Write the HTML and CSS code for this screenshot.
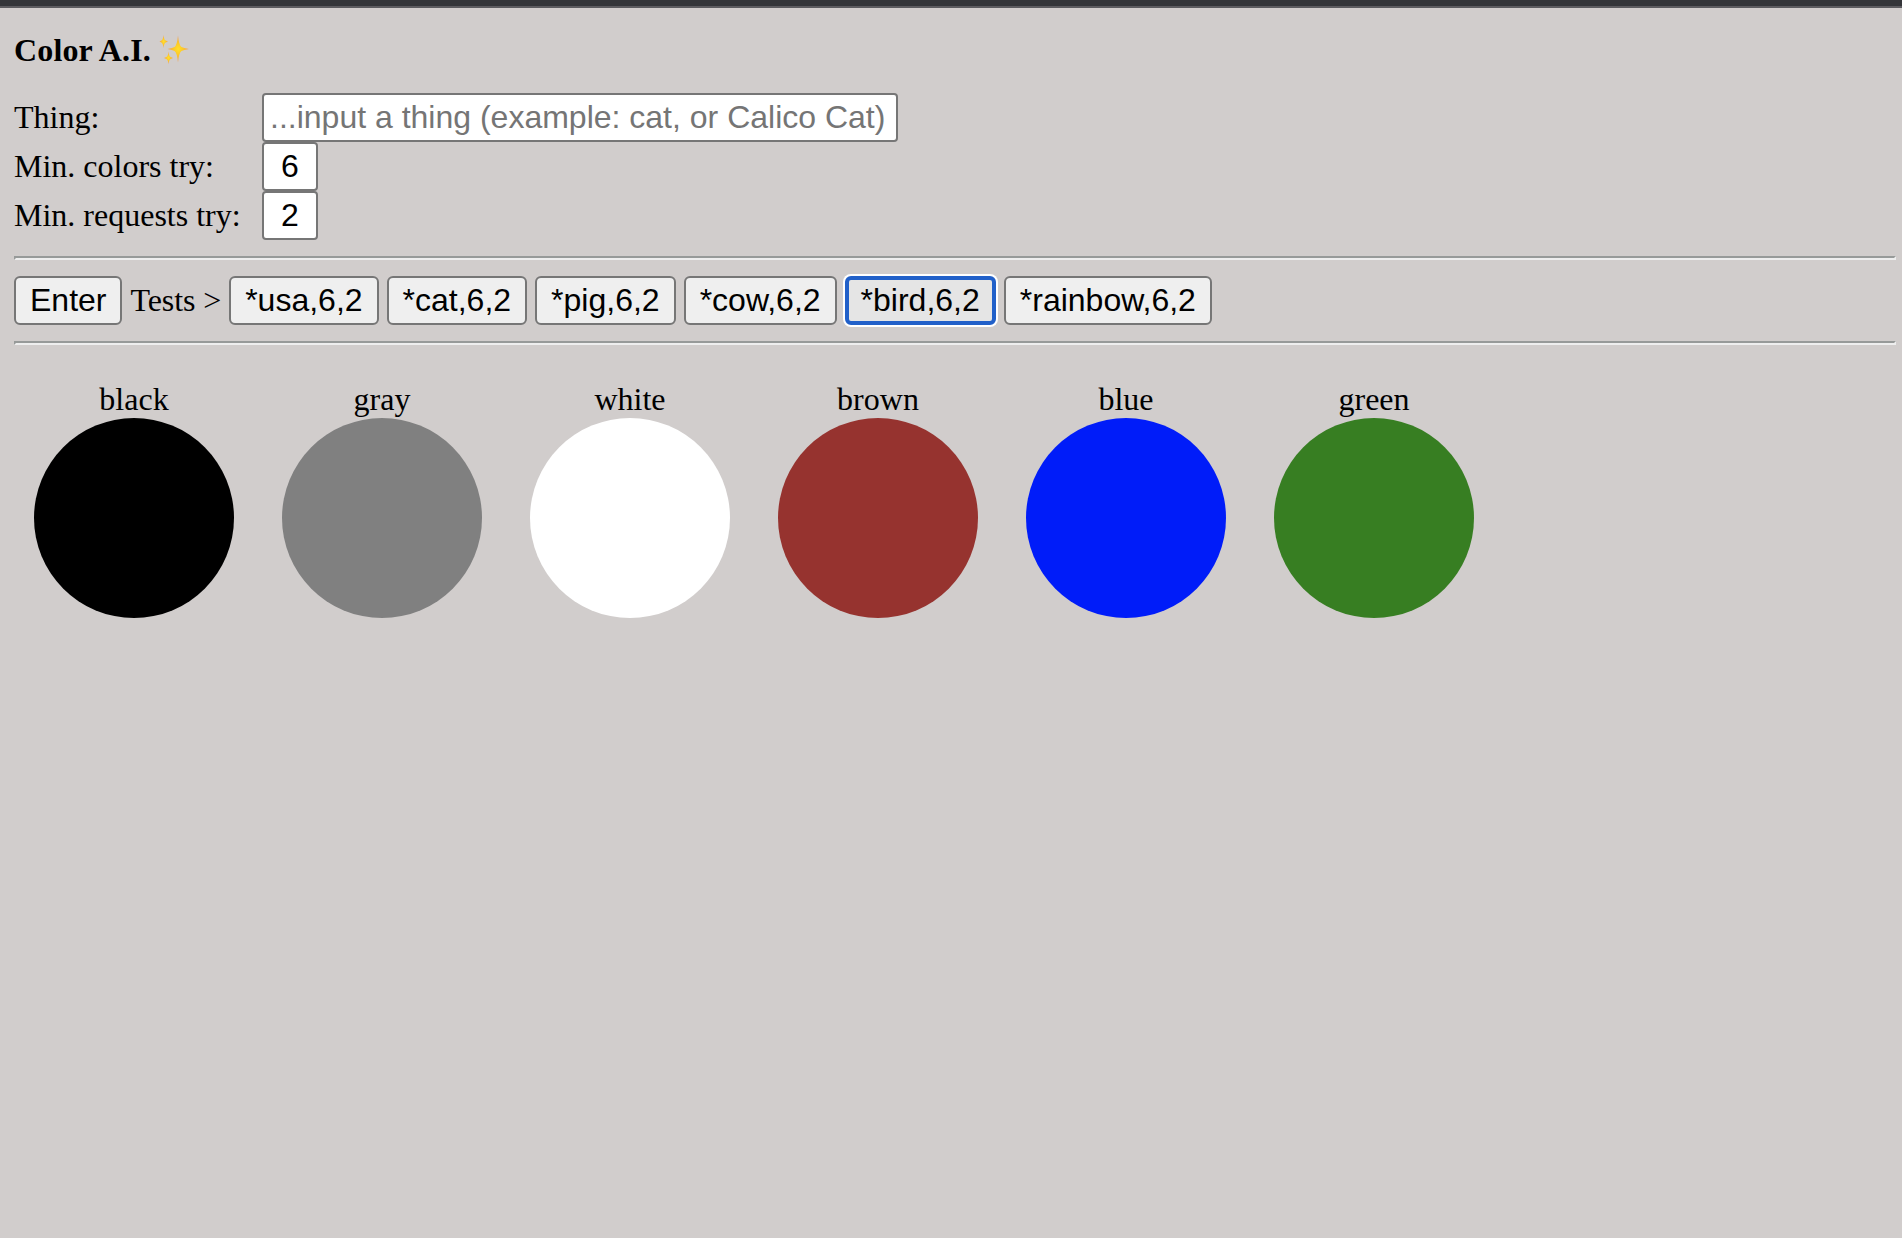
FILE: index.html
```html
<!DOCTYPE html>
<html lang="en">
<head>
<meta charset="utf-8">
<title>Color A.I.</title>
<link rel="stylesheet" href="styles.css">
</head>
<body>
<div class="topbar"></div>
<main class="page">
  <h1 class="title">Color A.I.
    <svg class="sparkles" viewBox="0 0 30 30" aria-hidden="true">
      <defs>
        <radialGradient id="gold">
          <stop offset="0" stop-color="#ffe02c"/>
          <stop offset=".45" stop-color="#fcc82a"/>
          <stop offset="1" stop-color="#f09a58"/>
        </radialGradient>
      </defs>
      <g fill="url(#gold)">
        <path d="M18 1.500Q19 11.500 21.500 13Q23.500 14.200 29 15Q23.500 15.800 21.500 17Q19 18.500 18 28.500Q17 18.500 14.500 17Q12.500 15.800 7.500 15Q12.500 14.200 14.500 13Q17 11.500 18 1.500Z"/>
        <path d="M3.500 1Q4 5.500 5.300 6.300L8 7.500L5.300 8.700Q4 9.500 3.500 14Q3 9.500 1.700 8.700L-.5 7.500L1.700 6.300Q3 5.500 3.500 1Z"/>
        <path d="M8.500 17.500Q9 22 10.300 22.800L13 24L10.300 25.200Q9 26 8.500 30Q8 26 6.700 25.200L4 24L6.700 22.800Q8 22 8.500 17.500Z"/>
      </g>
    </svg>
  </h1>
  <form class="fields">
    <label for="thing">Thing:</label>
    <input class="field wide" id="thing" placeholder="...input a thing (example: cat, or Calico Cat)">
    <label for="colors">Min. colors try:</label>
    <input class="field small" id="colors" value="6">
    <label for="requests">Min. requests try:</label>
    <input class="field small" id="requests" value="2">
  </form>
  <hr class="rule">
  <div class="actions">
    <button class="btn">Enter</button>
    <span class="tests">Tests &gt;</span>
    <button class="btn">*usa,6,2</button>
    <button class="btn">*cat,6,2</button>
    <button class="btn">*pig,6,2</button>
    <button class="btn">*cow,6,2</button>
    <button class="btn active">*bird,6,2</button>
    <button class="btn">*rainbow,6,2</button>
  </div>
  <hr class="rule">
  <div class="swatches">
    <div class="swatch">black<div class="dot black"></div></div>
    <div class="swatch">gray<div class="dot gray"></div></div>
    <div class="swatch">white<div class="dot white"></div></div>
    <div class="swatch">brown<div class="dot brown"></div></div>
    <div class="swatch">blue<div class="dot blue"></div></div>
    <div class="swatch">green<div class="dot green"></div></div>
  </div>
</main>
</body>
</html>
```
FILE: styles.css
```css
* { box-sizing: border-box; }
body {
  margin: 0;
  min-height: 100vh;
  background: #d1cdcc;
  color: #000;
  font: 32px/37px "Liberation Serif", "Times New Roman", serif;
}
.topbar {
  height: 8px;
  background: #343539;
  border-bottom: 2px solid #5d5c60;
}
.page { padding: 24px 6px 0 14px; }
.title {
  display: flex;
  gap: 9px;
  margin: 0 0 24px;
  font-size: 32px;
  line-height: 37px;
  letter-spacing: .15px;
}
.sparkles {
  width: 30px;
  height: 30px;
  margin-top: 2px;
  overflow: visible;
}
.fields {
  display: grid;
  grid-template-columns: 248px auto;
  grid-auto-rows: 49px;
  align-items: center;
  justify-items: start;
  margin: 0;
}
.field {
  height: 49px;
  margin: 0;
  padding: 2px 6px;
  border: 2px solid #767676;
  border-radius: 4px;
  background: #fff;
  color: #000;
  font: 32px "Liberation Sans", Arial, sans-serif;
}
.field::placeholder { color: #757575; }
.wide { width: 636px; }
.small { width: 56px; text-align: center; }
.rule {
  height: 4px;
  margin: 16px 0;
  border: 2px solid;
  border-color: #979a99 #eee #eee #979a99;
}
.actions {
  display: flex;
  align-items: center;
  gap: 8px;
}
.tests { letter-spacing: -.1px; }
.btn {
  height: 49px;
  margin: 0;
  padding: 0 14px;
  border: 2px solid #767676;
  border-radius: 6px;
  background: #efefef;
  color: #000;
  font: 32px "Liberation Sans", Arial, sans-serif;
}
.active {
  background: #e5e5e5;
  border: 4px solid #2160c9;
  padding: 0 12px;
  box-shadow: 0 0 0 2px #fff;
}
.swatches {
  display: flex;
  gap: 48px;
  padding: 20px;
}
.swatch { width: 200px; text-align: center; }
.dot {
  height: 200px;
  border-radius: 50%;
}
.black { background: #000; }
.gray { background: #808080; }
.white { background: #fff; }
.brown { background: #96332f; }
.blue { background: #001cf9; }
.green { background: #377e22; }
```
